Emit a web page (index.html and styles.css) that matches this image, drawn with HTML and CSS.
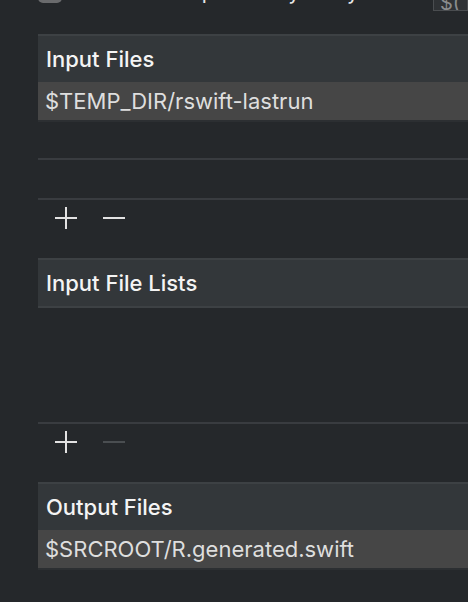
FILE: index.html
```html
<!DOCTYPE html>
<html>
<head>
<meta charset="utf-8">
<link rel="stylesheet" href="styles.css">
</head>
<body>
<div class="page">
  <div class="topbar">
    <span class="checkbox"></span>
    <span class="check-label">Based on dependency analysis</span>
    <span class="field">$(</span>
  </div>

  <section class="group first">
    <div class="head">Input Files</div>
    <div class="row filled"><span>$TEMP_DIR/rswift-lastrun</span></div>
    <div class="row empty short"></div>
    <div class="row empty"></div>
    <div class="toolbar">
      <svg class="icon" viewBox="0 0 22 22"><path d="M11 0V22M0 11H22" stroke="#e2e2e2" stroke-width="2"/></svg>
      <svg class="icon" viewBox="0 0 22 22"><path d="M0 11H22" stroke="#e2e2e2" stroke-width="2"/></svg>
    </div>
  </section>

  <section class="group">
    <div class="head bordered">Input File Lists</div>
    <div class="list-empty"></div>
    <div class="toolbar">
      <svg class="icon" viewBox="0 0 22 22"><path d="M11 0V22M0 11H22" stroke="#e2e2e2" stroke-width="2"/></svg>
      <svg class="icon" viewBox="0 0 22 22"><path d="M0 11H22" stroke="#4a4e51" stroke-width="2"/></svg>
    </div>
  </section>

  <section class="group">
    <div class="head">Output Files</div>
    <div class="row filled"><span>$SRCROOT/R.generated.swift</span></div>
  </section>
</div>
</body>
</html>
```

FILE: styles.css
```css
html, body {
  margin: 0;
  padding: 0;
  background: #25282b;
  overflow: hidden;
}
body {
  font-family: Inter, "Noto Sans", "Liberation Sans", sans-serif;
  width: 468px;
  height: 602px;
}
.page {
  padding-left: 38px;
}
.topbar {
  display: flex;
  height: 30px;
  margin-top: -27px;
  align-items: flex-end;
}
.checkbox {
  width: 24px;
  height: 24px;
  border-radius: 5px;
  background: #6a6b6d;
  flex: none;
}
.check-label {
  color: #e6e6e6;
  font-size: 21px;
  line-height: 21px;
  margin-left: 16px;
  margin-bottom: 1px;
  white-space: nowrap;
}
.field {
  align-self: flex-start;
  margin-left: auto;
  height: 38px;
  width: 35px;
  flex: none;
  background: #2f3235;
  border: 1px solid #4a4d50;
  color: #8a8c8e;
  font-size: 20px;
  line-height: 58px;
  padding-left: 6px;
  box-sizing: border-box;
  overflow: hidden;
}
.group {
  display: flex;
  flex-direction: column;
}
.group.first {
  margin-top: 31px;
}
.head {
  border-top: 2px solid #3d4144;
  height: 46px;
  background: #33373a;
  color: #f4f4f4;
  font-weight: 500;
  font-size: 22px;
  display: flex;
  align-items: center;
  padding-left: 8px;
}
.head.bordered {
  border-bottom: 2px solid #3d4144;
}
.row {
  display: flex;
  align-items: center;
  box-sizing: border-box;
}
.row.filled {
  height: 40px;
  background: #464646;
  border-bottom: 2px solid #2c2f32;
  color: #dedede;
  font-size: 22px;
  padding-left: 7px;
  padding-bottom: 1px;
}
.row.empty {
  height: 40px;
  border-bottom: 2px solid #393c40;
}
.row.empty.short {
  height: 38px;
}
.list-empty {
  height: 116px;
  border-bottom: 2px solid #393c40;
  box-sizing: border-box;
}
.toolbar {
  height: 58px;
  display: flex;
  align-items: flex-start;
  gap: 26px;
  padding-top: 7px;
  padding-left: 17px;
  box-sizing: border-box;
}
.icon {
  width: 22px;
  height: 22px;
  display: block;
}
```
